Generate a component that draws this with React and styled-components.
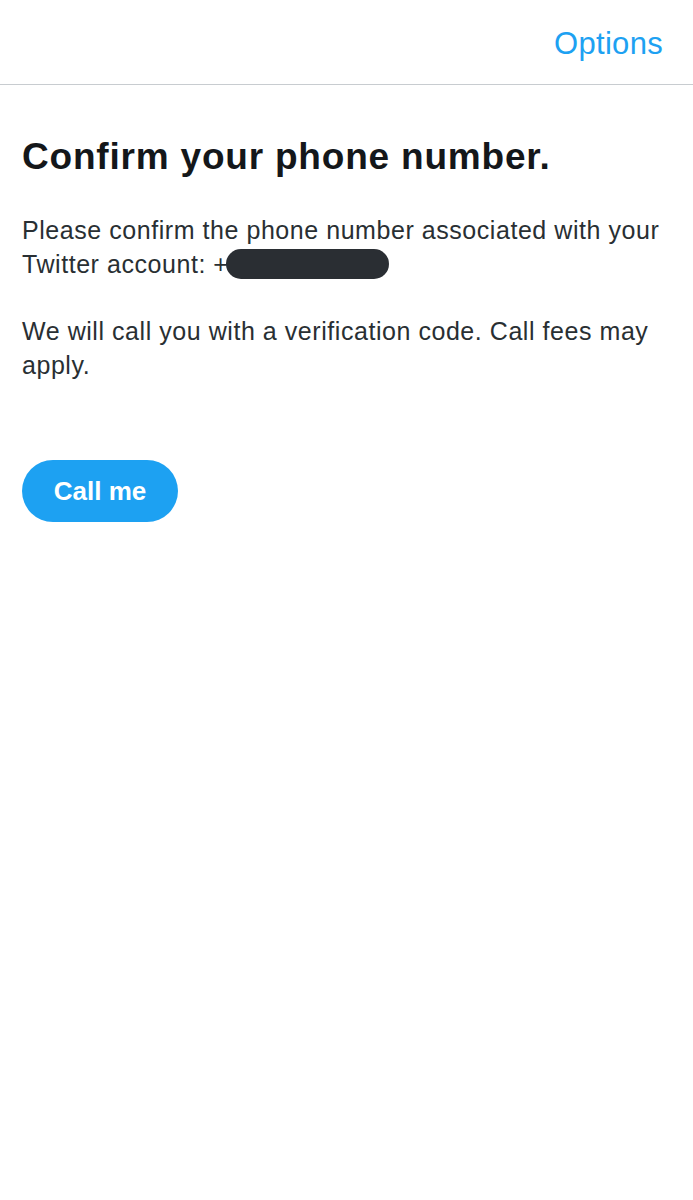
import styled, { createGlobalStyle } from "styled-components";

const GlobalStyle = createGlobalStyle`
  html, body {
    margin: 0;
    padding: 0;
    background: #ffffff;
  }
  body {
    font-family: "Liberation Sans", Arial, sans-serif;
  }
`;

const Page = styled.div`
  width: 693px;
  min-height: 1200px;
  background: #ffffff;
`;

const Header = styled.header`
  height: 85px;
  display: flex;
  align-items: center;
  justify-content: flex-end;
  padding: 0 30px 0 0;
  box-sizing: border-box;
  border-bottom: 1px solid #c8ccd0;
`;

const OptionsLink = styled.a`
  font-size: 31px;
  letter-spacing: 0.3px;
  color: #1da1f2;
  text-decoration: none;
  margin-top: 4px;
  cursor: pointer;
`;

const Content = styled.main`
  padding: 50px 22px 0;
`;

const Title = styled.h1`
  margin: 0;
  font-size: 37px;
  line-height: 44px;
  letter-spacing: 0.8px;
  font-weight: 700;
  color: #14171a;
`;

const Paragraph = styled.p`
  margin: ${(p) => (p.first ? "34px 0 0" : "33px 0 0")};
  font-size: 25px;
  line-height: 34px;
  letter-spacing: 0.55px;
  color: #292f33;
`;

const Redacted = styled.span`
  display: inline-block;
  width: 163px;
  height: 30px;
  border-radius: 15px;
  background: #2a2e33;
  vertical-align: -6px;
  margin-left: -3px;
`;

const CallButton = styled.button`
  display: block;
  margin-top: 78px;
  width: 156px;
  height: 62px;
  border: none;
  border-radius: 31px;
  background: #1da1f2;
  color: #ffffff;
  font-family: "Liberation Sans", Arial, sans-serif;
  font-size: 26px;
  font-weight: 700;
  cursor: pointer;
`;

export default function App() {
  return (
    <Page>
      <GlobalStyle />
      <Header>
        <OptionsLink>Options</OptionsLink>
      </Header>
      <Content>
        <Title>Confirm your phone number.</Title>
        <Paragraph first>
          Please confirm the phone number associated with your Twitter
          account: +<Redacted />
        </Paragraph>
        <Paragraph>
          We will call you with a verification code. Call fees may apply.
        </Paragraph>
        <CallButton>Call me</CallButton>
      </Content>
    </Page>
  );
}
